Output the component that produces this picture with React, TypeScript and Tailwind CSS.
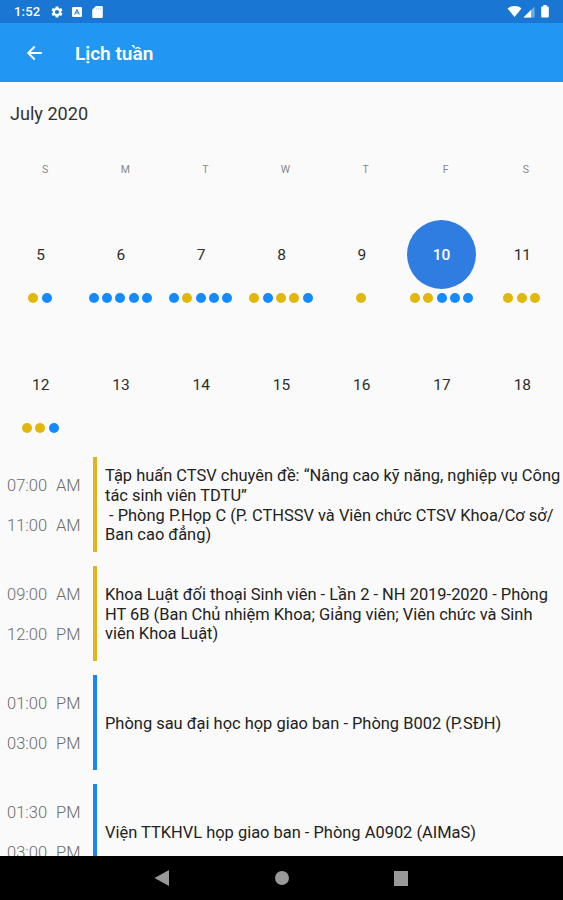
import React from "react";

type Dot = "y" | "b";

interface Day {
  date: number;
  dots: Dot[];
}

interface ScheduleItem {
  start: string[];
  end: string[];
  color: Dot;
  text: string;
}

const WEEKDAYS = ["S", "M", "T", "W", "T", "F", "S"];
const SELECTED_DATE = 10;

const weeks: Day[][] = [
  [
    { date: 5, dots: ["y", "b"] },
    { date: 6, dots: ["b", "b", "b", "b", "b"] },
    { date: 7, dots: ["b", "y", "b", "b", "b"] },
    { date: 8, dots: ["y", "b", "y", "y", "b"] },
    { date: 9, dots: ["y"] },
    { date: 10, dots: ["y", "y", "b", "b", "b"] },
    { date: 11, dots: ["y", "y", "y"] },
  ],
  [
    { date: 12, dots: ["y", "y", "b"] },
    { date: 13, dots: [] },
    { date: 14, dots: [] },
    { date: 15, dots: [] },
    { date: 16, dots: [] },
    { date: 17, dots: [] },
    { date: 18, dots: [] },
  ],
];

const schedule: ScheduleItem[] = [
  {
    start: ["07:00", "AM"],
    end: ["11:00", "AM"],
    color: "y",
    text: "Tập huấn CTSV chuyên đề: “Nâng cao kỹ năng, nghiệp vụ Công\ntác sinh viên TDTU”\n - Phòng P.Họp C (P. CTHSSV và Viên chức CTSV Khoa/Cơ sở/\nBan cao đẳng)",
  },
  {
    start: ["09:00", "AM"],
    end: ["12:00", "PM"],
    color: "y",
    text: "Khoa Luật đối thoại Sinh viên - Lần 2 - NH 2019-2020 - Phòng\nHT 6B (Ban Chủ nhiệm Khoa; Giảng viên; Viên chức và Sinh\nviên Khoa Luật)",
  },
  {
    start: ["01:00", "PM"],
    end: ["03:00", "PM"],
    color: "b",
    text: "Phòng sau đại học họp giao ban - Phòng B002 (P.SĐH)",
  },
  {
    start: ["01:30", "PM"],
    end: ["03:00", "PM"],
    color: "b",
    text: "Viện TTKHVL họp giao ban - Phòng A0902 (AIMaS)",
  },
];

function StatusBar() {
  return (
    <div className="flex h-[23px] shrink-0 items-center bg-[#1976d2] pl-3.5 pr-3 text-white">
      <span className="w-[36px] text-[13px] font-medium leading-none tracking-[0.2px]">
        1:52
      </span>
      {/* settings */}
      <svg className="h-[14px] w-[14px]" viewBox="0 0 24 24" fill="currentColor">
        <path d="M19.14 12.94c.04-.3.06-.61.06-.94s-.02-.64-.07-.94l2.03-1.58a.49.49 0 0 0 .12-.61l-1.92-3.32a.49.49 0 0 0-.59-.22l-2.39.96a7 7 0 0 0-1.62-.94l-.36-2.54a.48.48 0 0 0-.48-.41h-3.84a.47.47 0 0 0-.47.41l-.36 2.54c-.59.24-1.13.57-1.62.94l-2.39-.96a.48.48 0 0 0-.59.22L2.74 8.87a.48.48 0 0 0 .12.61l2.03 1.58c-.05.3-.09.63-.09.94s.02.64.07.94l-2.03 1.58a.49.49 0 0 0-.12.61l1.92 3.32c.12.22.37.29.59.22l2.39-.96c.5.38 1.03.7 1.62.94l.36 2.54c.05.24.24.41.48.41h3.84c.24 0 .44-.17.47-.41l.36-2.54c.59-.24 1.13-.56 1.62-.94l2.39.96c.22.08.47 0 .59-.22l1.92-3.32a.48.48 0 0 0-.12-.61zM12 15.6a3.6 3.6 0 1 1 0-7.2 3.6 3.6 0 0 1 0 7.2z" />
      </svg>
      {/* notification */}
      <svg className="ml-2 h-[10px] w-[10px]" viewBox="0 0 10 10">
        <rect width="10" height="10" rx="1.2" fill="#fff" />
        <path d="M2.7 7.6 4.9 2.4 7.3 7.6M3.6 5.9h2.8" fill="none" stroke="#1976d2" strokeWidth="1" />
      </svg>
      {/* sd card */}
      <svg className="ml-[10px] h-3 w-[11px]" viewBox="0 0 11 12">
        <path d="M4 0h5.6a1.2 1.2 0 0 1 1.2 1.2v9.6A1.2 1.2 0 0 1 9.6 12H1.4A1.2 1.2 0 0 1 .2 10.8V3.7z" fill="#fff" />
        <path d="M4.3 1.8v2M6.3 1.8v2M8.3 1.8v2" stroke="#1976d2" strokeWidth=".3" />
      </svg>
      <div className="ml-auto flex items-center pr-0.5">
        <svg className="h-[11px] w-[15px]" viewBox="0 0 16 12" fill="#fff">
          <path d="M8 12 .4 2.7C2.5 1 5 .1 8 .1s5.5.9 7.6 2.6z" />
        </svg>
        <svg className="ml-px mt-px h-3 w-3" viewBox="0 0 12 12">
          <path d="M11.5.5v11H.5z" fill="#fff" fillOpacity=".4" />
          <path d="M8 4v7.5H.5z" fill="#fff" />
        </svg>
        <svg className="ml-[6px] h-[13px] w-2" viewBox="0 0 8 13" fill="#fff">
          <path d="M2.3 0h3.4v1.5h1.3a.8.8 0 0 1 .8.8v9.4a.8.8 0 0 1-.8.8H1a.8.8 0 0 1-.8-.8V2.3a.8.8 0 0 1 .8-.8h1.3z" />
        </svg>
      </div>
    </div>
  );
}

function AppBar() {
  return (
    <header className="flex h-[59px] shrink-0 items-center bg-[#2196f3] pl-[26px] text-white">
      <button type="button" aria-label="Back">
        <svg className="h-4 w-4" viewBox="0 0 16 16" fill="none" stroke="currentColor" strokeWidth="2">
          <path d="M8.7 1.5 2.2 8l6.500 6.500M2.300 8h13.500" />
        </svg>
      </button>
      <h1 className="ml-[33px] pt-[2px] text-[19px] font-semibold leading-6">Lịch tuần</h1>
    </header>
  );
}

function DayCell({ day }: { day: Day }) {
  const selected = day.date === SELECTED_DATE;

  return (
    <div className="flex flex-col items-center">
      <div
        className={`flex h-[69px] w-[69px] items-center justify-center rounded-full pt-[2.5px] text-[15.5px] ${
          selected ? "bg-[#2f7de1] font-medium text-white" : "pl-px text-[#2d2d2d]"
        }`}
      >
        {day.date}
      </div>
      <div className="mt-[4px] flex h-[10px] gap-[3.4px]">
        {day.dots.map((dot, i) => (
          <span
            key={i}
            className={`h-[10px] w-[10px] rounded-full ${
              dot === "y" ? "bg-[#e2b70c]" : "bg-[#148aff]"
            }`}
          />
        ))}
      </div>
    </div>
  );
}

function Time({ value }: { value: string[] }) {
  return (
    <div className="flex h-5 items-center">
      <span className="w-[49px]">{value[0]}</span>
      <span>{value[1]}</span>
    </div>
  );
}

function ScheduleRow({ item }: { item: ScheduleItem }) {
  return (
    <div className="flex h-[95px] shrink-0">
      <div className="flex w-[93px] shrink-0 flex-col justify-center gap-5 pl-[7px] pt-[3px] text-[16.5px] font-light text-[#6c6c6c]">
        <Time value={item.start} />
        <Time value={item.end} />
      </div>
      <div
        className={`w-1 shrink-0 ${item.color === "y" ? "bg-[#e0b61f]" : "bg-[#1c84f5]"}`}
      />
      <p className="flex items-center whitespace-pre pl-2 pt-[2px] text-[16.45px] leading-[19.8px] text-[#222]">
        {item.text}
      </p>
    </div>
  );
}

function NavBar() {
  return (
    <nav className="flex h-11 shrink-0 items-center bg-black pl-[154px]">
      <svg className="h-4 w-[15px]" viewBox="0 0 15 16" fill="#999">
        <path d="M15 0v16L.5 8z" />
      </svg>
      <span className="ml-[106px] h-[14px] w-[14px] rounded-full bg-[#999]" />
      <span className="ml-[105px] h-[15px] w-[14px] bg-[#999]" />
    </nav>
  );
}

export default function App() {
  return (
    <div className="flex h-[900px] w-[563px] flex-col overflow-hidden bg-[#fafafa] font-['Roboto',sans-serif]">
      <StatusBar />
      <AppBar />
      <main className="flex min-h-0 flex-1 flex-col overflow-hidden">
        <h2 className="pl-[10px] pt-5 text-[18.1px] leading-6 text-[#333]">July 2020</h2>
        <div className="mt-[36px] ml-[5px] grid w-[561px] shrink-0 grid-cols-7 text-[10.5px] leading-4 text-[#888]">
          {WEEKDAYS.map((label, i) => (
            <span key={i} className="text-center">
              {label}
            </span>
          ))}
        </div>
        <div className="mt-[42px] flex w-[562px] shrink-0 flex-col gap-[46.5px]">
          {weeks.map((week, i) => (
            <div key={i} className="grid grid-cols-7">
              {week.map((day) => (
                <DayCell key={day.date} day={day} />
              ))}
            </div>
          ))}
        </div>
        <div className="mt-[24.5px] flex flex-col gap-[14px]">
          {schedule.map((item, i) => (
            <ScheduleRow key={i} item={item} />
          ))}
        </div>
      </main>
      <NavBar />
    </div>
  );
}
